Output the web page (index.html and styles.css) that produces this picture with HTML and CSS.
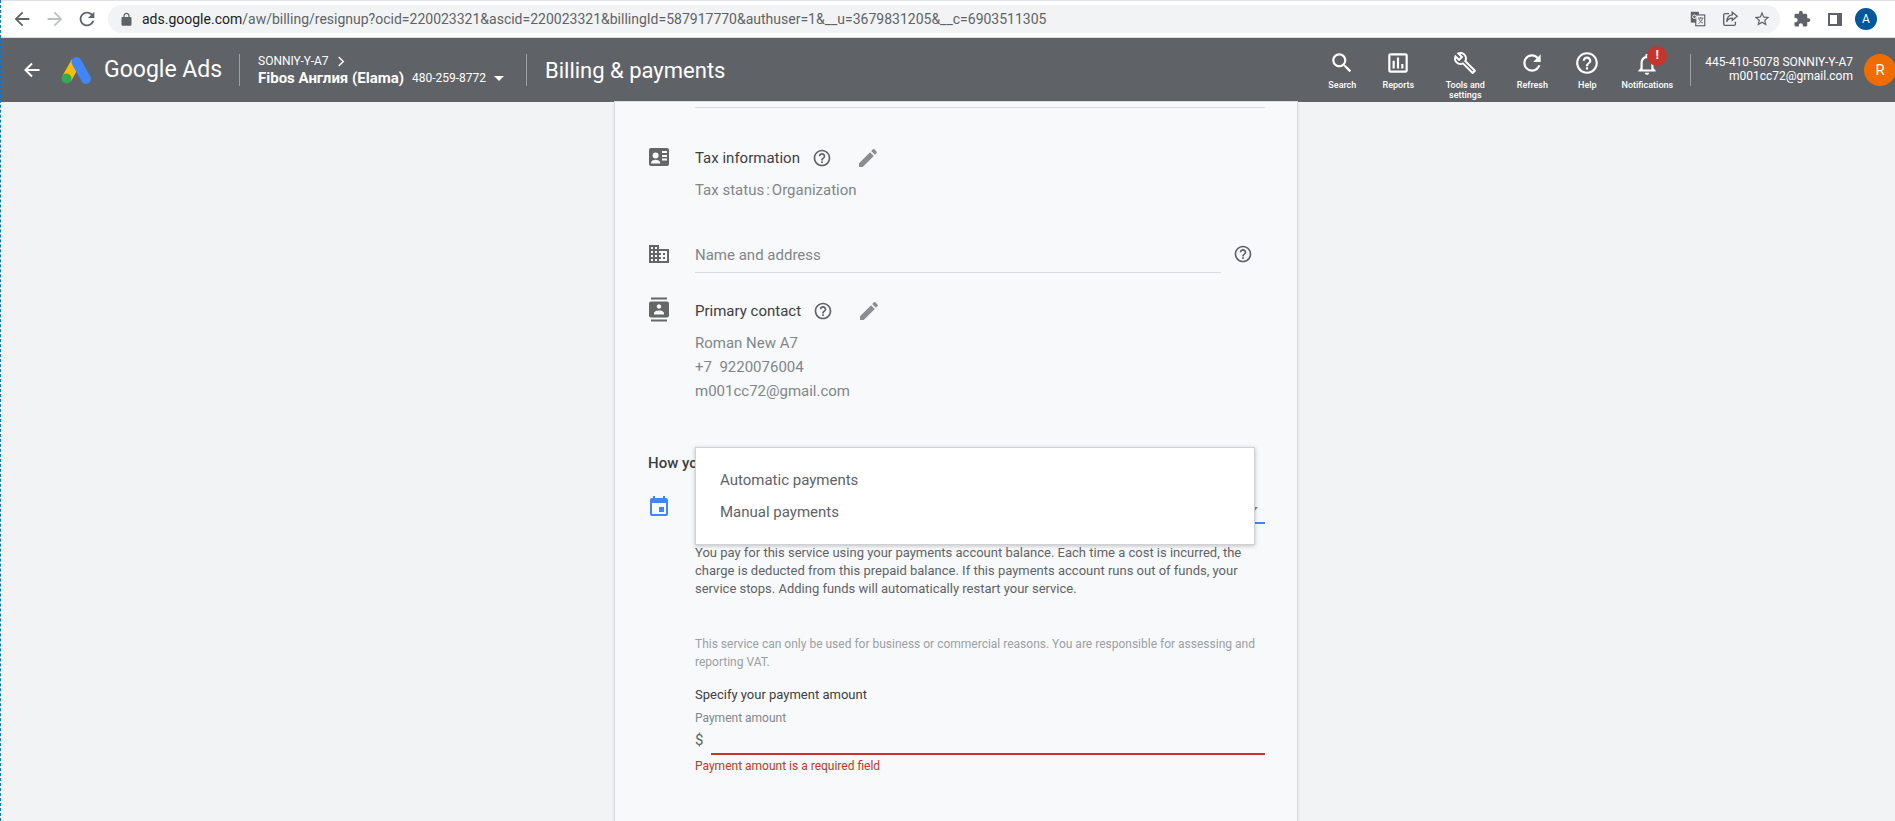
FILE: index.html
```html
<!DOCTYPE html>
<html lang="en">

<head>
    <meta charset="UTF-8">
    <title>Billing &amp; payments</title>
    <link rel="stylesheet" href="styles.css">
</head>

<body>
    <div class="dash-line"></div>

    <!-- browser toolbar -->
    <div class="chrome-bar">
        <svg class="nav-icon" viewBox="0 0 24 24"><path d="M20 11H7.83l5.59-5.59L12 4l-8 8 8 8 1.41-1.41L7.83 13H20v-2z"/></svg>
        <svg class="nav-icon nav-off" viewBox="0 0 24 24"><path d="M12 4l-1.41 1.41L16.17 11H4v2h12.17l-5.58 5.59L12 20l8-8z"/></svg>
        <svg class="nav-icon nav-reload" viewBox="0 0 24 24"><path d="M17.65 6.35C16.2 4.9 14.21 4 12 4c-4.42 0-7.99 3.58-7.99 8s3.57 8 7.99 8c3.73 0 6.84-2.55 7.73-6h-2.08c-.82 2.33-3.04 4-5.65 4-3.31 0-6-2.69-6-6s2.69-6 6-6c1.66 0 3.14.69 4.22 1.78L13 11h7V4l-2.35 2.35z"/></svg>
        <div class="omnibox">
            <svg class="lock" viewBox="0 0 24 24"><path d="M18 8h-1V6c0-2.76-2.24-5-5-5S7 3.24 7 6v2H6c-1.1 0-2 .9-2 2v10c0 1.1.9 2 2 2h12c1.1 0 2-.9 2-2V10c0-1.1-.9-2-2-2zM9 6c0-1.66 1.34-3 3-3s3 1.34 3 3v2H9V6z"/></svg>
            <span class="url"><b>ads.google.com</b>/aw/billing/resignup?ocid=220023321&amp;ascid=220023321&amp;billingId=587917770&amp;authuser=1&amp;__u=3679831205&amp;__c=6903511305</span>
            <div class="omni-icons">
                <svg class="omni-icon" viewBox="0 0 20 20">
                    <rect x="2" y="2" width="9" height="12" fill="#5f6368"/>
                    <rect x="7.5" y="5.5" width="10" height="12" fill="#f1f3f4" stroke="#5f6368" stroke-width="1.3"/>
                    <path d="M10 9h6M13 8v1.500M15 9c-.5 3-2.500 5-4.500 6M11 9.500c.5 2.500 2.500 4.500 4.500 5" fill="none" stroke="#5f6368"/>
                    <circle cx="6" cy="7.500" r="2" fill="none" stroke="#fff"/>
                </svg>
                <svg class="omni-icon" viewBox="0 0 20 20">
                    <path d="M9 4H4.500A1.500 1.500 0 0 0 3 5.500v10A1.500 1.500 0 0 0 4.500 17h10a1.500 1.500 0 0 0 1.500-1.500V13" fill="none" stroke="#5f6368" stroke-width="1.500"/>
                    <path d="M12.500 2.500 18 7l-5.500 4.500V9C9.500 9 7.500 10 6.500 13c0-4 2-7 6-7.500z" fill="none" stroke="#5f6368" stroke-width="1.500"/>
                </svg>
                <svg class="omni-icon" viewBox="0 0 24 24"><path d="M22 9.240l-7.190-.62L12 2 9.190 8.630 2 9.240l5.460 4.730L5.820 21 12 17.270 18.180 21l-1.630-7.030L22 9.240zM12 15.400l-3.760 2.270 1-4.280-3.320-2.880 4.380-.38L12 6.100l1.710 4.040 4.380.38-3.320 2.880 1 4.280L12 15.400z"/></svg>
            </div>
        </div>
        <svg class="ext-icon" viewBox="0 0 24 24"><path d="M20.500 11H19V7c0-1.100-.9-2-2-2h-4V3.500C13 2.120 11.880 1 10.500 1S8 2.120 8 3.500V5H4c-1.100 0-1.990.9-1.990 2v3.800H3.500c1.490 0 2.700 1.210 2.700 2.700s-1.210 2.700-2.700 2.700H2V20c0 1.100.9 2 2 2h3.800v-1.500c0-1.490 1.210-2.700 2.700-2.700 1.490 0 2.700 1.210 2.700 2.700V22H17c1.100 0 2-.9 2-2v-4h1.500c1.380 0 2.500-1.120 2.500-2.500S21.880 11 20.500 11z"/></svg>
        <div class="side-panel"></div>
        <div class="profile">A</div>
    </div>

    <!-- ads header -->
    <header class="ads-header">
        <svg class="back-arrow" viewBox="0 0 18 18"><path d="M16.500 9H2.500M9 2.500 2.500 9 9 15.500" fill="none" stroke="#fff" stroke-width="2"/></svg>
        <svg class="ads-logo" viewBox="0 0 30 28">
            <path d="M15 6 5.500 23" stroke="#fbbc04" stroke-width="10"/>
            <path d="M15.500 6 25 23" stroke="#4285f4" stroke-width="10" stroke-linecap="round"/>
            <circle cx="5.500" cy="22.500" r="5" fill="#34a853"/>
        </svg>
        <div class="brand">Google Ads</div>
        <div class="breadcrumb">
            <div class="crumb-top">SONNIY-Y-A7
                <svg class="crumb-chevron" viewBox="0 0 8 12"><path d="M1.500 1 6.500 6l-5 5" fill="none" stroke="#fff" stroke-width="1.600"/></svg>
            </div>
            <div class="crumb-main"><b>Fibos Англия (Elama)</b><span class="crumb-id">480-259-8772</span><span class="crumb-caret"></span></div>
        </div>
        <div class="page-title">Billing &amp; payments</div>

        <nav class="actions">
            <div class="action">
                <svg viewBox="0 0 24 24"><path d="M15.500 14h-.79l-.28-.27C15.410 12.590 16 11.110 16 9.500 16 5.910 13.090 3 9.500 3S3 5.910 3 9.500 5.910 16 9.500 16c1.610 0 3.090-.59 4.230-1.570l.27.28v.79l5 4.990L20.490 19l-4.990-5zm-6 0C7.010 14 5 11.990 5 9.500S7.010 5 9.500 5 14 7.010 14 9.500 11.990 14 9.500 14z"/></svg>
                <span>Search</span>
            </div>
            <div class="action">
                <svg viewBox="0 0 24 24"><path d="M19 3H5c-1.100 0-2 .9-2 2v14c0 1.100.9 2 2 2h14c1.100 0 2-.9 2-2V5c0-1.100-.9-2-2-2zm0 16H5V5h14v14zM7 10h2v7H7zM11 7h2v10h-2zM15 13h2v4h-2z"/></svg>
                <span>Reports</span>
            </div>
            <div class="action action-tools">
                <svg viewBox="0 0 24 24"><path d="M22.610 18.990l-9.080-9.080c.93-2.340.45-5.100-1.440-7C9.790.61 6.210.4 3.660 2.260L7.500 6.110 6.080 7.520 2.250 3.690C.39 6.230.6 9.820 2.900 12.110c1.860 1.860 4.570 2.350 6.890 1.480l9.110 9.110c.39.39 1.020.39 1.410 0l2.300-2.300c.4-.38.4-1.010 0-1.410zm-3 1.600l-9.460-9.460c-.61.45-1.290.72-2 .82-1.360.2-2.790-.21-3.830-1.250C3.370 9.760 2.930 8.500 3 7.260l3.090 3.090 4.240-4.240-3.090-3.090c1.240-.07 2.490.37 3.440 1.310 1.080 1.080 1.490 2.570 1.240 3.960-.12.71-.42 1.370-.88 1.960l9.450 9.450-.88.880z"/></svg>
                <span>Tools and<br>settings</span>
            </div>
            <div class="action">
                <svg viewBox="0 0 24 24"><path d="M17.650 6.350C16.200 4.900 14.210 4 12 4c-4.420 0-7.990 3.580-7.990 8s3.570 8 7.990 8c3.730 0 6.840-2.550 7.730-6h-2.080c-.82 2.330-3.040 4-5.650 4-3.310 0-6-2.690-6-6s2.690-6 6-6c1.660 0 3.140.69 4.220 1.780L13 11h7V4l-2.350 2.350z"/></svg>
                <span>Refresh</span>
            </div>
            <div class="action">
                <svg viewBox="0 0 24 24"><path d="M11 18h2v-2h-2v2zm1-16C6.480 2 2 6.480 2 12s4.480 10 10 10 10-4.480 10-10S17.520 2 12 2zm0 18c-4.410 0-8-3.590-8-8s3.590-8 8-8 8 3.590 8 8-3.590 8-8 8zm0-14c-2.210 0-4 1.790-4 4h2c0-1.100.9-2 2-2s2 .9 2 2c0 2-3 1.750-3 5h2c0-2.250 3-2.500 3-5 0-2.210-1.790-4-4-4z"/></svg>
                <span>Help</span>
            </div>
            <div class="action action-bell">
                <svg viewBox="0 0 24 24"><path d="M12 22c1.100 0 2-.9 2-2h-4c0 1.100.9 2 2 2zm6-6v-5c0-3.070-1.630-5.640-4.500-6.320V4c0-.83-.67-1.500-1.500-1.500s-1.500.67-1.500 1.500v.68C7.640 5.360 6 7.920 6 11v5l-2 2v1h16v-1l-2-2zm-2 1H8v-6c0-2.480 1.510-4.500 4-4.500s4 2.020 4 4.500v6z"/></svg>
                <span>Notifications</span>
                <i class="badge">!</i>
            </div>
        </nav>

        <div class="account">
            <div>445-410-5078 SONNIY-Y-A7</div>
            <div>m001cc72@gmail.com</div>
        </div>
        <div class="avatar">R</div>
    </header>

    <main class="page">
        <section class="card">
            <div class="top-rule"></div>

            <div class="row row-tax">
                <svg class="row-icon" viewBox="0 0 20 18">
                    <rect width="20" height="18" rx="2" fill="#666"/>
                    <circle cx="6.600" cy="7.600" r="3" fill="#f8f9fa"/>
                    <path d="M2 15c0-2 2.500-3.200 4.600-3.200s4.600 1.200 4.600 3.200v.5H2z" fill="#f8f9fa"/>
                    <path d="M13 3h5v2h-5zM13 7h5v2h-5zM13 10.500h5v2h-5z" fill="#f8f9fa"/>
                </svg>
                <div>
                    <div class="row-head">
                        <span class="head-label">Tax information</span>
                        <svg class="help-icon" viewBox="0 0 24 24"><path d="M11 18h2v-2h-2v2zm1-16C6.480 2 2 6.480 2 12s4.480 10 10 10 10-4.480 10-10S17.520 2 12 2zm0 18c-4.410 0-8-3.590-8-8s3.590-8 8-8 8 3.590 8 8-3.590 8-8 8zm0-14c-2.210 0-4 1.790-4 4h2c0-1.100.9-2 2-2s2 .9 2 2c0 2-3 1.750-3 5h2c0-2.250 3-2.500 3-5 0-2.210-1.790-4-4-4z"/></svg>
                        <svg class="edit-icon" viewBox="0 0 24 24"><path d="M3 17.250V21h3.750L17.810 9.940l-3.750-3.750L3 17.250zM20.710 7.040c.39-.39.39-1.020 0-1.410l-2.340-2.340c-.39-.39-1.020-.39-1.410 0l-1.830 1.830 3.750 3.750 1.830-1.830z"/></svg>
                    </div>
                    <div class="detail">Tax status<span class="colon">:</span>Organization</div>
                </div>
            </div>

            <div class="row row-name">
                <svg class="row-icon" viewBox="2 3 20 18"><path d="M12 7V3H2v18h20V7H12zM6 19H4v-2h2v2zm0-4H4v-2h2v2zm0-4H4V9h2v2zm0-4H4V5h2v2zm4 12H8v-2h2v2zm0-4H8v-2h2v2zm0-4H8V9h2v2zm0-4H8V5h2v2zm10 12h-8v-2h2v-2h-2v-2h2v-2h-2V9h8v10zm-2-8h-2v2h2v-2zm0 4h-2v2h2v-2z"/></svg>
                <div class="name-field">
                    <div class="name-input">Name and address</div>
                    <svg class="help-icon" viewBox="0 0 24 24"><path d="M11 18h2v-2h-2v2zm1-16C6.480 2 2 6.480 2 12s4.480 10 10 10 10-4.480 10-10S17.520 2 12 2zm0 18c-4.410 0-8-3.590-8-8s3.590-8 8-8 8 3.590 8 8-3.590 8-8 8zm0-14c-2.210 0-4 1.790-4 4h2c0-1.100.9-2 2-2s2 .9 2 2c0 2-3 1.750-3 5h2c0-2.250 3-2.500 3-5 0-2.210-1.790-4-4-4z"/></svg>
                </div>
            </div>

            <div class="row row-contact">
                <svg class="row-icon icon-contact" viewBox="2 0 20 24"><path d="M20 0H4v2h16V0zM4 24h16v-2H4v2zM20 4H4c-1.100 0-2 .9-2 2v12c0 1.100.9 2 2 2h16c1.100 0 2-.9 2-2V6c0-1.100-.9-2-2-2zm-8 2.750c1.240 0 2.250 1.010 2.250 2.250s-1.010 2.250-2.250 2.250S9.750 10.240 9.750 9 10.760 6.750 12 6.750zM17 17H7v-1.500c0-1.670 3.330-2.500 5-2.500s5 .83 5 2.500V17z"/></svg>
                <div>
                    <div class="row-head">
                        <span class="head-label">Primary contact</span>
                        <svg class="help-icon" viewBox="0 0 24 24"><path d="M11 18h2v-2h-2v2zm1-16C6.480 2 2 6.480 2 12s4.480 10 10 10 10-4.480 10-10S17.520 2 12 2zm0 18c-4.410 0-8-3.590-8-8s3.590-8 8-8 8 3.590 8 8-3.590 8-8 8zm0-14c-2.210 0-4 1.790-4 4h2c0-1.100.9-2 2-2s2 .9 2 2c0 2-3 1.750-3 5h2c0-2.250 3-2.500 3-5 0-2.210-1.790-4-4-4z"/></svg>
                        <svg class="edit-icon" viewBox="0 0 24 24"><path d="M3 17.250V21h3.750L17.810 9.940l-3.750-3.750L3 17.250zM20.710 7.040c.39-.39.39-1.020 0-1.410l-2.340-2.340c-.39-.39-1.020-.39-1.410 0l-1.830 1.830 3.750 3.750 1.830-1.830z"/></svg>
                    </div>
                    <div class="detail">Roman New A7</div>
                    <div class="detail-line">+7&nbsp; 9220076004</div>
                    <div class="detail-line">m001cc72@gmail.com</div>
                </div>
            </div>

            <h3 class="pay-title">How you pay</h3>

            <div class="row row-select">
                <svg class="row-icon icon-event" viewBox="3 1 18 20"><path d="M17 12h-5v5h5v-5zM16 1v2H8V1H6v2H5c-1.110 0-1.990.9-1.990 2L3 19c0 1.100.89 2 2 2h14c1.100 0 2-.9 2-2V5c0-1.100-.9-2-2-2h-1V1h-2zm3 18H5V8h14v11z"/></svg>
                <div class="select-field"><span class="select-caret"></span></div>
            </div>

            <div class="pay-body">
                <p class="pay-text">You pay for this service using your payments account balance. Each time a cost is incurred, the charge is deducted from this prepaid balance. If this payments account runs out of funds, your service stops. Adding funds will automatically restart your service.</p>
                <p class="pay-note">This service can only be used for business or commercial reasons. You are responsible for assessing and reporting VAT.</p>
                <div class="amount-title">Specify your payment amount</div>
                <div class="amount-label">Payment amount</div>
                <div class="amount-row">
                    <span class="amount-currency">$</span>
                    <div class="amount-input"></div>
                </div>
                <div class="amount-error">Payment amount is a required field</div>
            </div>

            <div class="menu">
                <div class="menu-item">Automatic payments</div>
                <div class="menu-item">Manual payments</div>
            </div>
        </section>
    </main>
</body>

</html>
```
FILE: styles.css
```css
/* global */
html,
body {
    height: 100%;
}

body {
    margin: 0;
    height: 821px;
    overflow: hidden;
    font-family: Roboto, "Liberation Sans", sans-serif;
    background-color: #f1f3f4;
    color: #3c4043;
}

svg {
    display: block;
    flex-shrink: 0;
    fill: currentColor;
}

.dash-line {
    position: absolute;
    left: 0;
    top: 0;
    bottom: 0;
    border-left: 1px dashed #0078d7;
    z-index: 5;
}

/* browser toolbar */
.chrome-bar {
    display: flex;
    align-items: center;
    height: 37px;
    box-sizing: border-box;
    border-top: 1px solid #dee1e6;
    background-color: #fff;
    color: #5f6368;
}

.nav-icon {
    width: 22px;
    height: 22px;
    margin-left: 11px;
}

.nav-off {
    color: #bdc1c6;
}

.nav-reload {
    margin-left: 10px;
}

.omnibox {
    display: flex;
    align-items: center;
    width: 1672px;
    height: 28px;
    margin-left: 10px;
    border-radius: 14px;
    background-color: #f1f3f4;
}

.lock {
    width: 15px;
    height: 15px;
    margin-left: 11px;
}

.url {
    margin-left: 8px;
    font-size: 14px;
    color: #5f6368;
    white-space: nowrap;
}

.url b {
    font-weight: 400;
    color: #202124;
}

.omni-icons {
    display: flex;
    gap: 14px;
    margin-left: auto;
    margin-right: 9px;
}

.omni-icon {
    width: 18px;
    height: 18px;
    color: #5f6368;
}

.ext-icon {
    width: 18px;
    height: 18px;
    margin-left: 13px;
}

.side-panel {
    width: 14px;
    height: 13px;
    box-sizing: border-box;
    margin-left: 17px;
    border: 2px solid #5f6368;
    border-right-width: 5px;
}

.profile {
    width: 22px;
    height: 22px;
    margin-left: 13px;
    border-radius: 50%;
    background-color: #01579b;
    color: #fff;
    font-size: 12px;
    line-height: 22px;
    text-align: center;
}

/* ads header */
.ads-header {
    display: flex;
    align-items: center;
    height: 65px;
    border-top: 1px solid #dadce0;
    box-sizing: border-box;
    background-color: #5f6368;
    color: #fff;
}

.back-arrow {
    width: 18px;
    height: 18px;
    margin-left: 23px;
}

.ads-logo {
    width: 30px;
    height: 28px;
    margin-left: 20px;
}

.brand {
    width: 136px;
    height: 32px;
    box-sizing: border-box;
    margin-left: 13px;
    border-right: 1px solid #9aa0a6;
    font-size: 23px;
    line-height: 32px;
    white-space: nowrap;
}

.breadcrumb {
    width: 269px;
    height: 32px;
    box-sizing: border-box;
    margin-left: 18px;
    border-right: 1px solid #9aa0a6;
}

.crumb-top {
    display: flex;
    align-items: center;
    gap: 8px;
    height: 14px;
    font-size: 12px;
    line-height: 14px;
}

.crumb-chevron {
    width: 8px;
    height: 11px;
    margin-left: 0;
}

.crumb-main {
    display: flex;
    align-items: center;
    height: 18px;
    margin-top: 1px;
    font-size: 15px;
    line-height: 18px;
}

.crumb-main b {
    font-weight: 700;
}

.crumb-id {
    margin-left: 8px;
    font-size: 12px;
}

.crumb-caret {
    width: 0;
    height: 0;
    margin-left: 8px;
    border-left: 5px solid transparent;
    border-right: 5px solid transparent;
    border-top: 5px solid #fff;
}

.page-title {
    margin-left: 18px;
    font-size: 22px;
    white-space: nowrap;
}

.actions {
    display: grid;
    grid-template-columns: 58px 54px 80px 54px 56px 64px;
    margin-left: auto;
    align-self: stretch;
}

.action {
    position: relative;
    display: flex;
    flex-direction: column;
    align-items: center;
    padding-top: 12px;
    font-size: 9px;
    font-weight: 500;
    line-height: 10px;
    text-align: center;
}

.action svg {
    width: 26px;
    height: 26px;
    margin-bottom: 4px;
}

.action-tools svg {
    width: 24px;
    height: 24px;
    margin-top: 1px;
    margin-bottom: 5px;
}

.action-bell svg {
    margin-top: 1px;
    margin-bottom: 3px;
}

.badge {
    position: absolute;
    top: 8px;
    left: 32px;
    width: 20px;
    height: 20px;
    border-radius: 50%;
    background-color: #c5352b;
    font-size: 13px;
    font-style: normal;
    font-weight: 700;
    line-height: 18px;
}

.account {
    height: 32px;
    box-sizing: border-box;
    margin-left: 11px;
    padding-left: 14px;
    padding-top: 1px;
    border-left: 1px solid #9aa0a6;
    font-size: 12px;
    line-height: 14px;
    text-align: right;
    white-space: nowrap;
}

.avatar {
    flex-shrink: 0;
    width: 32px;
    height: 32px;
    margin-left: 11px;
    margin-right: -1px;
    border-radius: 50%;
    background-color: #ef6c00;
    font-size: 15px;
    line-height: 32px;
    text-align: center;
}

/* page */
.page {
    height: 719px;
    padding-left: 615px;
}

.card {
    position: relative;
    width: 682px;
    height: 719px;
    box-sizing: border-box;
    padding: 5px 32px 0 34px;
    background-color: #f8f9fa;
    box-shadow: 0 0 0 1px #dadce0, 0 1px 3px rgba(60, 64, 67, 0.3);
    font-size: 15px;
    line-height: 24px;
}

.top-rule {
    height: 1px;
    margin-left: 46px;
    background-color: #dadce0;
}

.row {
    display: grid;
    grid-template-columns: 46px 1fr;
}

.row-icon {
    width: 20px;
    height: 18px;
    margin-top: 2px;
    color: #666;
}

.row-tax {
    margin-top: 38px;
}

.row-name {
    margin-top: 41px;
}

.row-contact {
    margin-top: 26px;
}

.icon-contact {
    height: 25px;
    margin-top: -2px;
}

.row-head {
    display: flex;
    align-items: center;
    height: 24px;
    color: #3c4043;
}

.head-label {
    margin-right: 12px;
    white-space: nowrap;
}

.help-icon {
    width: 20px;
    height: 20px;
    color: #5f6368;
}

.edit-icon {
    width: 24px;
    height: 24px;
    margin-left: 24px;
    color: #8a8d91;
}

.detail {
    margin-top: 8px;
    color: #80868b;
}

.detail-line {
    color: #80868b;
}

.colon {
    margin: 0 2px;
}

.name-field {
    display: flex;
    color: #80868b;
}

.name-input {
    width: 526px;
    height: 30px;
    box-sizing: border-box;
    border-bottom: 1px solid #dadce0;
    line-height: 25px;
}

.name-field .help-icon {
    margin-left: 12px;
    margin-top: 1px;
}

.pay-title {
    margin: 48px 0 0 -1px;
    font-size: 15px;
    font-weight: 500;
    line-height: 24px;
    color: #3c4043;
}

.row-select {
    margin-top: 17px;
}

.icon-event {
    width: 18px;
    height: 20px;
    margin-top: 4px;
    margin-left: 1px;
    color: #4285f4;
}

.select-field {
    position: relative;
    height: 32px;
    box-sizing: border-box;
    border-bottom: 2px solid #4285f4;
}

.select-caret {
    position: absolute;
    right: 7px;
    top: 15px;
    border-left: 4px solid transparent;
    border-right: 4px solid transparent;
    border-top: 5px solid #80868b;
}

.pay-body {
    margin-left: 46px;
}

.pay-text {
    margin: 20px 0 0;
    font-size: 13px;
    line-height: 18px;
    color: #5f6368;
}

.pay-note {
    margin: 37px 0 0;
    font-size: 12px;
    line-height: 18px;
    color: #9aa0a6;
}

.amount-title {
    margin-top: 15px;
    font-size: 13px;
    line-height: 18px;
    color: #3c4043;
}

.amount-label {
    margin-top: 6px;
    font-size: 12px;
    line-height: 16px;
    color: #80868b;
}

.amount-row {
    display: flex;
    height: 29px;
}

.amount-currency {
    width: 16px;
    font-size: 15px;
    line-height: 28px;
    color: #5f6368;
}

.amount-input {
    flex: 1;
    border-bottom: 2px solid #c5352b;
}

.amount-error {
    margin-top: 3px;
    font-size: 12px;
    line-height: 16px;
    color: #c5352b;
}

/* open dropdown */
.menu {
    position: absolute;
    left: 80px;
    top: 345px;
    width: 560px;
    box-sizing: border-box;
    padding: 16px 0;
    border: 1px solid #cfd1d4;
    background-color: #fff;
    box-shadow: 0 1px 4px rgba(60, 64, 67, 0.3);
}

.menu-item {
    padding-left: 24px;
    line-height: 32px;
    color: #5f6368;
}
```
